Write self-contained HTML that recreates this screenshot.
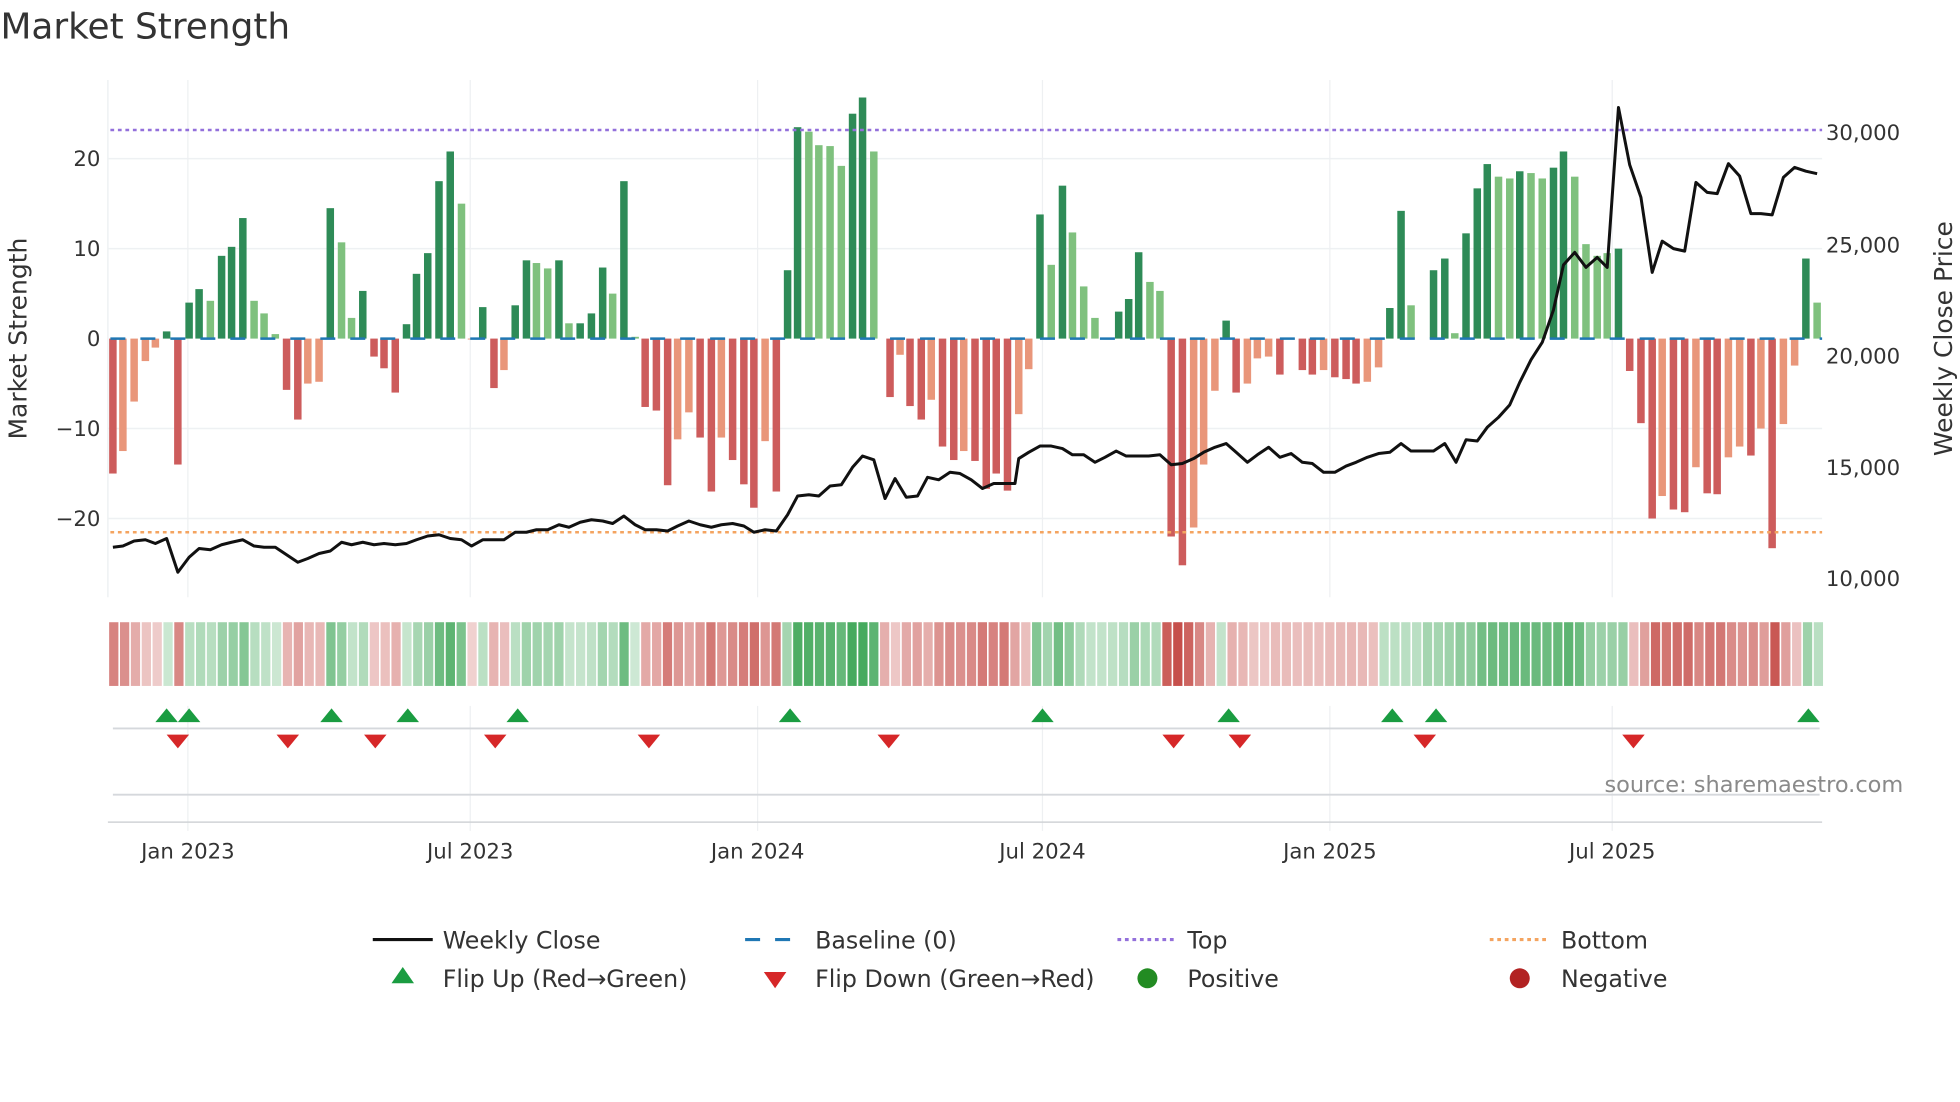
<!DOCTYPE html>
<html><head><meta charset="utf-8"><style>
html,body{margin:0;padding:0;background:#fff;width:1960px;height:1102px;overflow:hidden}
svg{display:block;font-family:"DejaVu Sans","Liberation Sans",sans-serif}
</style></head><body>
<svg id="s" width="1960" height="1102" viewBox="0 0 1568 882" xmlns="http://www.w3.org/2000/svg">
<rect width="1568" height="882" fill="#fff"/>
<text x="0" y="31" font-size="28.7" fill="#333">Market Strength</text>
<g id="grid" stroke="#eef1f3" stroke-width="1.2">
<line x1="86" x2="1458" y1="127" y2="127"/><line x1="86" x2="1458" y1="199" y2="199"/>
<line x1="86" x2="1458" y1="343" y2="343"/><line x1="86" x2="1458" y1="415" y2="415"/>
<line x1="86" x2="86" y1="64" y2="478"/>
</g>
<g id="vg" stroke="#eef0f2" stroke-width="1"></g>
<g id="bars"></g>
<line x1="88" x2="1458" y1="271" y2="271" stroke="#1f77b4" stroke-width="2" stroke-dasharray="12,12"/>
<line x1="88" x2="1458" y1="104" y2="104" stroke="#9370db" stroke-width="2" stroke-dasharray="3,3"/>
<line x1="88" x2="1458" y1="426" y2="426" stroke="#f4a460" stroke-width="2" stroke-dasharray="3,3"/>
<polyline id="pl" fill="none" stroke="#111" stroke-width="2.4" stroke-linejoin="round"/>
<g font-size="17" fill="#333" text-anchor="end">
<text x="80" y="133">20</text><text x="80" y="205">10</text><text x="80" y="277">0</text>
<text x="80" y="349">−10</text><text x="80" y="421">−20</text>
</g>
<g font-size="17" fill="#333">
<text x="1461" y="112">30,000</text><text x="1461" y="202">25,000</text><text x="1461" y="291">20,000</text>
<text x="1461" y="380">15,000</text><text x="1461" y="469">10,000</text>
</g>
<text transform="translate(21,271) rotate(-90)" font-size="20" fill="#333" text-anchor="middle">Market Strength</text>
<text transform="translate(1562,271) rotate(-90)" font-size="20" fill="#333" text-anchor="middle">Weekly Close Price</text>
<g id="heat"></g>
<line x1="90" x2="1456" y1="583" y2="583" stroke="#d5d8dc" stroke-width="1.5"/>
<line x1="90" x2="1456" y1="636" y2="636" stroke="#d5d8dc" stroke-width="1.5"/>
<line x1="86" x2="1458" y1="658" y2="658" stroke="#d0d3d6" stroke-width="1.2"/>
<g id="tri"></g>
<text x="1523" y="634" font-size="18" fill="#8a8a8a" text-anchor="end">source: sharemaestro.com</text>
<g font-size="17" fill="#333" text-anchor="middle">
<text x="150" y="687">Jan 2023</text><text x="376" y="687">Jul 2023</text><text x="606" y="687">Jan 2024</text>
<text x="834" y="687">Jul 2024</text><text x="1064" y="687">Jan 2025</text><text x="1290" y="687">Jul 2025</text>
</g>
<g font-size="19" fill="#333">
<line x1="298" x2="346" y1="752" y2="752" stroke="#111" stroke-width="2.5"/><text x="354" y="759">Weekly Close</text>
<line x1="596" x2="644" y1="752" y2="752" stroke="#1f77b4" stroke-width="2.5" stroke-dasharray="12,12"/><text x="652" y="759">Baseline (0)</text>
<line x1="894" x2="940" y1="752" y2="752" stroke="#9370db" stroke-width="2.5" stroke-dasharray="3,3"/><text x="950" y="759">Top</text>
<line x1="1192" x2="1238" y1="752" y2="752" stroke="#f4a460" stroke-width="2.5" stroke-dasharray="3,3"/><text x="1249" y="759">Bottom</text>
<polygon points="322,774 313,787 331,787" fill="#1a9c41"/><text x="354" y="790">Flip Up (Red→Green)</text>
<polygon points="611,778 629,778 620,791" fill="#d62728"/><text x="652" y="790">Flip Down (Green→Red)</text>
<circle cx="918" cy="783" r="8" fill="#228b22"/><text x="950" y="790">Positive</text>
<circle cx="1216" cy="783" r="8" fill="#b22222"/><text x="1249" y="790">Negative</text>
</g>
</svg>
<script>
var NS="http://www.w3.org/2000/svg";
function el(t,a,p){var e=document.createElementNS(NS,t);for(var k in a)e.setAttribute(k,a[k]);document.getElementById(p).appendChild(e);return e;}
[150,376,606,834,1064,1290].forEach(function(x){el("line",{x1:x,x2:x,y1:64,y2:478},"vg");el("line",{x1:x,x2:x,y1:565,y2:665},"vg");});
var B=[[90,-15,1],[98,-12.5,0],[107,-7,0],[116,-2.5,0],[124,-1,0],[133,.8,1],[142,-14,1],[151,4,1],[159,5.5,1],[168,4.2,0],[177,9.2,1],[185,10.2,1],[194,13.4,1],[203,4.2,0],[211,2.8,0],[220,.5,0],[229,-5.7,1],[238,-9,1],[246,-5,0],[255,-4.8,0],[264,14.5,1],[273,10.7,0],[281,2.3,0],[290,5.3,1],[299,-2,1],[307,-3.3,1],[316,-6,1],[325,1.6,1],[333,7.2,1],[342,9.5,1],[351,17.5,1],[360,20.8,1],[369,15,0],[377,-.1,0],[386,3.5,1],[395,-5.5,1],[403,-3.5,0],[412,3.7,1],[421,8.7,1],[429,8.4,0],[438,7.8,0],[447,8.7,1],[455,1.7,0],[464,1.7,1],[473,2.8,1],[482,7.9,1],[490,5,0],[499,17.5,1],[508,.2,0],[516,-7.6,1],[525,-8,1],[534,-16.3,1],[542,-11.2,0],[551,-8.2,0],[560,-11,1],[569,-17,1],[577,-11,0],[586,-13.5,1],[595,-16.2,1],[603,-18.8,1],[612,-11.4,0],[621,-17,1],[630,7.6,1],[638,23.5,1],[647,23,0],[655,21.5,0],[664,21.4,0],[673,19.2,0],[682,25,1],[690,26.8,1],[699,20.8,0],[712,-6.5,1],[720,-1.8,0],[728,-7.5,1],[737,-9,1],[745,-6.8,0],[754,-12,1],[763,-13.5,1],[771,-12.5,0],[780,-13.6,1],[789,-16.7,1],[797,-15,1],[806,-16.9,1],[815,-8.4,0],[823,-3.4,0],[832,13.8,1],[841,8.2,0],[850,17,1],[858,11.8,0],[867,5.8,0],[876,2.3,0],[895,3,1],[903,4.4,1],[911,9.6,1],[920,6.3,0],[928,5.3,0],[937,-22,1],[946,-25.2,1],[955,-21,0],[963,-14,0],[972,-5.8,0],[981,2,1],[989,-6,1],[998,-5,0],[1006,-2.2,0],[1015,-2,0],[1024,-4,1],[1042,-3.5,1],[1050,-4,1],[1059,-3.5,0],[1068,-4.3,1],[1077,-4.5,1],[1085,-5,1],[1094,-4.8,0],[1103,-3.2,0],[1112,3.4,1],[1121,14.2,1],[1129,3.7,0],[1147,7.6,1],[1156,8.9,1],[1164,.6,0],[1173,11.7,1],[1182,16.7,1],[1190,19.4,1],[1199,18,0],[1208,17.8,0],[1216,18.6,1],[1225,18.4,0],[1234,17.8,0],[1243,19,1],[1251,20.8,1],[1260,18,0],[1269,10.5,0],[1278,9.2,0],[1286,9.5,0],[1295,10,1],[1304,-3.6,1],[1313,-9.4,1],[1322,-20,1],[1330,-17.5,0],[1339,-19,1],[1348,-19.3,1],[1357,-14.3,0],[1366,-17.2,1],[1374,-17.3,1],[1383,-13.2,0],[1392,-12,0],[1401,-13,1],[1409,-10,0],[1418,-23.3,1],[1427,-9.5,0],[1436,-3,0],[1445,8.9,1],[1454,4,0]];
B.forEach(function(b){var x=b[0],v=b[1],h=Math.abs(v)*7.2;var c=v>=0?(b[2]?"#2e8b57":"#7fc17e"):(b[2]?"#cd5c5c":"#e9967a");
el("rect",{x:x-3,y:v>=0?271-h:271,width:6,height:h,fill:c},"bars");});
for(var i=0;i<158;i++){var x=87+i*8.69;var v=0,bd=1e9;B.forEach(function(b){var d=Math.abs(b[0]-(x+4));if(d<bd){bd=d;v=b[1];}});
var a=0.25+0.7*Math.min(1,Math.abs(v)/25);var c=v>=0?"rgba(60,165,85,"+a+")":"rgba(195,70,65,"+a+")";
el("rect",{x:x,y:498,width:7.4,height:51,fill:c},"heat");}
var P=[[90,438],[98,437],[107,433],[116,432],[124,435],[133,431],[142,458],[151,446],[159,439],[168,440],[177,436],[185,434],[194,432],[203,437],[211,438],[220,438],[229,444],[238,450],[246,447],[255,443],[264,441],[273,434],[281,436],[290,434],[299,436],[307,435],[316,436],[325,435],[333,432],[342,429],[351,428],[360,431],[369,432],[377,437],[386,432],[395,432],[403,432],[412,426],[421,426],[429,424],[438,424],[447,420],[455,422],[464,418],[473,416],[482,417],[490,419],[499,413],[508,420],[516,424],[525,424],[534,425],[542,421],[551,417],[560,420],[569,422],[577,420],[586,419],[595,421],[603,426],[612,424],[621,425],[630,412],[638,397],[647,396],[655,397],[664,389],[673,388],[682,374],[690,365],[699,368],[708,399],[716,383],[725,398],[734,397],[742,382],[751,384],[760,378],[768,379],[777,384],[786,391],[795,387],[803,387],[812,387],[815,367],[823,362],[832,357],[841,357],[850,359],[858,364],[867,364],[876,370],[884,366],[893,361],[901,365],[910,365],[919,365],[928,364],[937,372],[946,371],[955,367],[963,362],[972,358],[981,355],[989,362],[998,370],[1006,364],[1015,358],[1024,366],[1033,363],[1042,370],[1050,371],[1059,378],[1068,378],[1077,373],[1085,370],[1094,366],[1103,363],[1112,362],[1121,355],[1129,361],[1138,361],[1147,361],[1156,355],[1165,370],[1173,352],[1182,353],[1190,342],[1199,334],[1208,324],[1216,306],[1225,288],[1234,274],[1243,248],[1251,212],[1260,202],[1269,214],[1278,206],[1286,214],[1295,86],[1304,132],[1313,158],[1322,218],[1330,193],[1339,199],[1348,201],[1357,146],[1366,154],[1374,155],[1383,131],[1392,141],[1401,171],[1409,171],[1418,172],[1427,142],[1436,134],[1445,137],[1454,139]];
document.getElementById("pl").setAttribute("points",P.map(function(p){return p.join(",")}).join(" "));
[133,151,265,326,414,632,834,983,1114,1149,1447].forEach(function(x){el("polygon",{points:(x)+",567 "+(x-9)+",578 "+(x+9)+",578",fill:"#1a9c41"},"tri");});
[142,230,300,396,519,711,939,992,1140,1307].forEach(function(x){el("polygon",{points:(x-9)+",588 "+(x+9)+",588 "+x+",599",fill:"#d62728"},"tri");});
</script>
</body></html>
